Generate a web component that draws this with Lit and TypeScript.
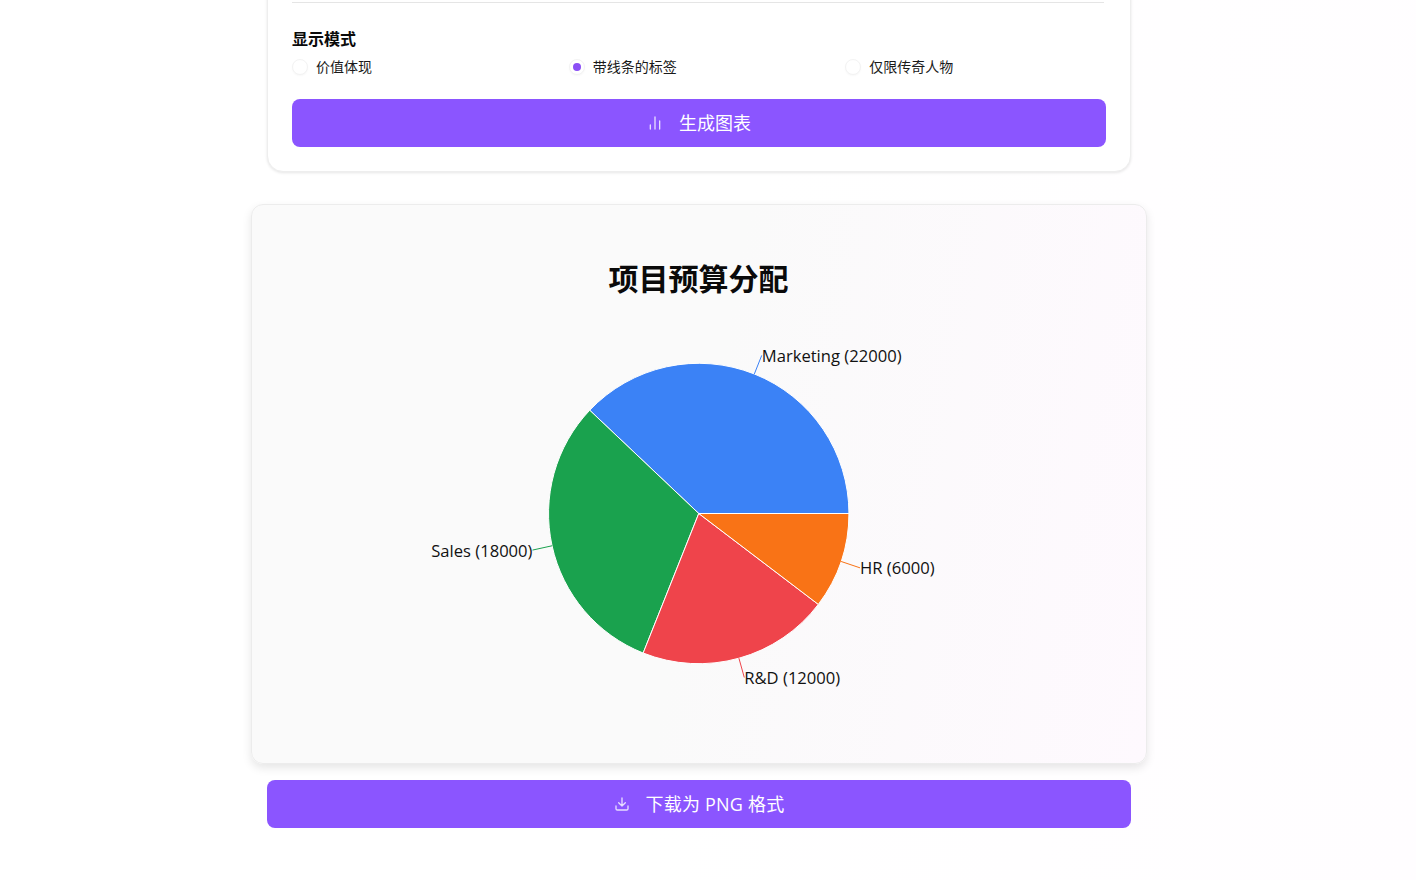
import { LitElement, html, css, svg } from "lit";
import { customElement } from "lit/decorators.js";

const CX = 447.75, CY = 309.5, R = 150.2;
const data = [
  { name: "Marketing", value: 22000, color: "#3b82f6" },
  { name: "Sales", value: 18000, color: "#1aa24e" },
  { name: "R&D", value: 12000, color: "#ef444b" },
  { name: "HR", value: 6000, color: "#f97316" },
];
const total = data.reduce((s, d) => s + d.value, 0);
const pt = (deg: number, r: number) => {
  const a = (deg * Math.PI) / 180;
  return [CX + r * Math.cos(a), CY - r * Math.sin(a)];
};

@customElement("app-root")
export class AppRoot extends LitElement {
  static styles = css`
    :host {
      display: block;
      height: 880px;
      box-sizing: border-box;
      padding-right: 18px;
      overflow: hidden;
      background: linear-gradient(100deg, #ffffff 50%, #fffdff 100%);
      font-family: "Open Sans", "Noto Sans CJK SC", sans-serif;
      color: #111;
    }
    .page { width: 896px; margin: -21px auto 0; display: flex; flex-direction: column; align-items: center; }
    .panel {
      width: 864px; box-sizing: border-box; background: #fff;
      border: 1px solid #eeeeee; border-radius: 16px;
      box-shadow: 0 1px 3px rgba(0,0,0,.1);
      padding: 22px 24px 24px;
    }
    .rule { height: 1px; background: #e5e5e5; margin-right: 2px; margin-bottom: 25px; }
    .group-title { font-size: 16px; font-weight: 700; line-height: 22px; color: #0a0a0a; margin-bottom: 7px; }
    .radios { display: grid; grid-template-columns: repeat(3, 1fr); gap: 16px; margin-bottom: 22px; }
    .radio { display: flex; align-items: center; gap: 8px; font-size: 14px; line-height: 20px; color: #1a1a1a; }
    .dot { width: 16px; height: 16px; box-sizing: border-box; border-radius: 50%; border: 1px solid #f3f3f3; background: #fff; display: flex; align-items: center; justify-content: center; box-shadow: 0 1px 2px rgba(0,0,0,.03); }
    .dot i { width: 8px; height: 8px; border-radius: 50%; background: #8b4ff5; }
    .btn {
      height: 48px; border-radius: 8px; background: #8b55ff; color: #fff;
      display: flex; align-items: center; justify-content: center; gap: 16px;
      font-size: 18px; line-height: 28px;
    }
    .btn svg { width: 16px; height: 16px; fill: none; stroke: #fff; stroke-width: 2; stroke-linecap: round; stroke-linejoin: round; opacity: .8; }
    .chart {
      width: 896px; height: 560px; margin-top: 32px; box-sizing: border-box;
      border: 1px solid #ececec; border-radius: 12px;
      background: linear-gradient(100deg, #fafafa 50%, #fef9fe 100%);
      box-shadow: 0 4px 10px rgba(0,0,0,.1);
      position: relative;
    }
    .chart h2 { margin: 0; padding-top: 54px; padding-right: 1px; text-align: center; font-size: 30px; line-height: 40px; font-weight: 700; color: #0a0a0a; }
    .pie { position: absolute; left: -1px; top: -1px; width: 896px; height: 560px; }
    .pie text { font-size: 16.6px; fill: #111; dominant-baseline: central; }
    .download { width: 864px; margin-top: 16px; }
    .download span { letter-spacing: .2px; }
  `;

  private pie() {
    let start = 0;
    return data.map((d) => {
      const sweep = (d.value / total) * 360;
      const end = start + sweep;
      const mid = start + sweep / 2;
      const [x1, y1] = pt(start, R);
      const [x2, y2] = pt(end, R);
      const [lx1, ly1] = pt(mid, R);
      const [lx2, ly2] = pt(mid, R + 20);
      const right = Math.cos((mid * Math.PI) / 180) >= 0;
      start = end;
      return svg`
        <path d="M${CX} ${CY}L${x1} ${y1}A${R} ${R} 0 ${sweep > 180 ? 1 : 0} 0 ${x2} ${y2}Z" fill=${d.color} stroke="#fff" stroke-width="1"></path>
        <path d="M${lx1} ${ly1}L${lx2} ${ly2}" stroke=${d.color} fill="none"></path>
        <text x=${lx2} y=${ly2} text-anchor=${right ? "start" : "end"}>${d.name} (${d.value})</text>`;
    });
  }

  render() {
    return html`
      <div class="page">
        <section class="panel">
          <div class="rule"></div>
          <div class="group-title">显示模式</div>
          <div class="radios">
            <label class="radio"><span class="dot"></span>价值体现</label>
            <label class="radio"><span class="dot"><i></i></span>带线条的标签</label>
            <label class="radio"><span class="dot"></span>仅限传奇人物</label>
          </div>
          <div class="btn">
            <svg viewBox="0 0 24 24"><path d="M5 21v-6M12 21V3M19 21V9"></path></svg>
            <span>生成图表</span>
          </div>
        </section>
        <section class="chart">
          <h2>项目预算分配</h2>
          <svg class="pie" viewBox="0 0 896 560">${this.pie()}</svg>
        </section>
        <div class="btn download">
          <svg viewBox="0 0 24 24"><path d="M12 15V3M21 15v4a2 2 0 0 1-2 2H5a2 2 0 0 1-2-2v-4M7 10l5 5 5-5"></path></svg>
          <span>下载为 PNG 格式</span>
        </div>
      </div>
    `;
  }
}
